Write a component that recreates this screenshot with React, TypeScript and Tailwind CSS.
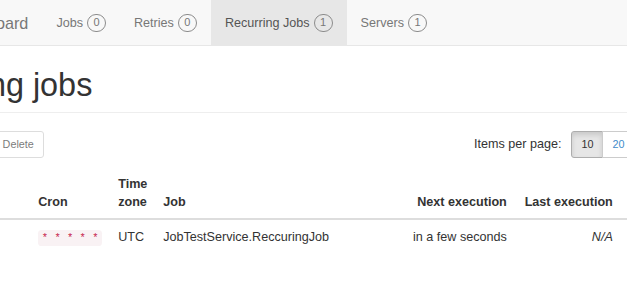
import { X, PlayCircle } from 'lucide-react';

const navItems = [
  { label: 'Jobs', count: 0 },
  { label: 'Retries', count: 0 },
  { label: 'Recurring Jobs', count: 1, active: true },
  { label: 'Servers', count: 1 },
];

const perPage = [10, 20, 50, 100, 500];

function Badge({ value }: { value: number }) {
  return (
    <span className="ml-[4px] inline-flex h-[18px] min-w-[19px] items-center justify-center rounded-full border border-[#8c8c8c] px-[4px] text-[11px] leading-none text-[#777]">
      {value}
    </span>
  );
}

export default function App() {
  return (
    <div className="h-[297px] w-full overflow-hidden bg-white font-['Liberation_Sans',Arial,sans-serif] text-[#333]">
      {/* page is wider than the window, we only see a slice of it */}
      <div className="-ml-[130px] w-[883px]">
        {/* navbar */}
        <div className="flex h-[46px] border-b border-[#e7e7e7] bg-[#f8f8f8]">
          <a className="py-[13.5px] pr-[14px] pl-[13.5px] text-[16.2px] leading-[18px] text-[#777]">Hangfire Dashboard</a>
          <ul className="flex">
            {navItems.map(item => (
              <li key={item.label}>
                <a
                  className={`flex h-[45px] items-center px-[14px] text-[12.6px] leading-[18px] ${
                    item.active ? 'bg-[#e7e7e7] text-[#555]' : 'text-[#777]'
                  }`}
                >
                  {item.label}
                  <Badge value={item.count} />
                </a>
              </li>
            ))}
          </ul>
        </div>

        {/* content */}
        <div className="px-[13.5px]">
          <h1 className="mt-[22px] mb-[18px] border-b border-[#eee] pb-[8.1px] text-[32.4px] leading-[1.1] font-normal text-[#333]">
            Recurring jobs
          </h1>

          <div className="flex items-center">
            <button className="flex items-center gap-[3px] rounded-[3px] border border-[#357ebd] bg-[#428bca] px-[9px] py-[4.5px] text-[10.8px] leading-[16.2px] text-white opacity-65">
              <PlayCircle className="h-[11px] w-[11px]" />
              Trigger now
            </button>
            <button className="ml-[4.5px] flex items-center gap-[3px] rounded-[3px] border border-[#ccc] bg-white px-[9px] py-[4.5px] text-[10.8px] leading-[16.2px] text-[#333] opacity-65">
              <X className="h-[11px] w-[11px]" />
              Delete
            </button>

            <div className="ml-auto flex items-center">
              <span className="mr-[10px] text-[12.6px] leading-[18px] text-[#333]">Items per page:</span>
              <div className="flex">
                {perPage.map((n, i) => (
                  <a
                    key={n}
                    className={`border px-[9px] py-[4.5px] text-[10.8px] leading-[16.2px] ${i > 0 ? '-ml-px' : 'rounded-l-[3px]'} ${
                      i === perPage.length - 1 ? 'rounded-r-[3px]' : ''
                    } ${
                      n === 10
                        ? 'border-[#adadad] bg-[#e6e6e6] text-[#333] shadow-[inset_0_3px_5px_rgba(0,0,0,0.125)]'
                        : 'border-[#ccc] bg-white text-[#428bca]'
                    }`}
                  >
                    {n}
                  </a>
                ))}
              </div>
            </div>
          </div>

          <table className="mt-[10px] w-full table-fixed text-[12.6px] leading-[18px] text-[#333]">
            <thead>
              <tr className="border-b-2 border-[#ddd]">
                <th className="w-[30px] p-[7.2px] text-left align-bottom">
                  <input type="checkbox" className="h-[12px] w-[12px]" />
                </th>
                <th className="w-[117.5px] p-[7.2px] text-left align-bottom font-bold">Id</th>
                <th className="w-[80px] p-[7.2px] text-left align-bottom font-bold">Cron</th>
                <th className="w-[45px] p-[7.2px] text-left align-bottom font-bold">Time zone</th>
                <th className="w-[247px] p-[7.2px] text-left align-bottom font-bold">Job</th>
                <th className="w-[111px] whitespace-nowrap p-[7.2px] text-right align-bottom font-bold">Next execution</th>
                <th className="w-[106px] whitespace-nowrap p-[7.2px] text-right align-bottom font-bold">Last execution</th>
                <th className="p-[7.2px] text-left align-bottom font-bold">Created</th>
              </tr>
            </thead>
            <tbody>
              <tr>
                <td className="p-[7.2px] align-top">
                  <input type="checkbox" className="h-[12px] w-[12px]" />
                </td>
                <td className="p-[7.2px] align-top">test-job</td>
                <td className="p-[7.2px] align-top">
                  <code className="rounded-[3.6px] bg-[#f9f2f4] px-[3.6px] py-[2px] font-['Liberation_Mono',monospace] text-[10.5px] text-[#c7254e]">
                    * * * * *
                  </code>
                </td>
                <td className="p-[7.2px] align-top">UTC</td>
                <td className="p-[7.2px] align-top">JobTestService.ReccuringJob</td>
                <td className="whitespace-nowrap p-[7.2px] text-right align-top">in a few seconds</td>
                <td className="p-[7.2px] text-right align-top">
                  <em>N/A</em>
                </td>
                <td className="p-[7.2px] align-top">a minute ago</td>
              </tr>
            </tbody>
          </table>
        </div>
      </div>
    </div>
  );
}
